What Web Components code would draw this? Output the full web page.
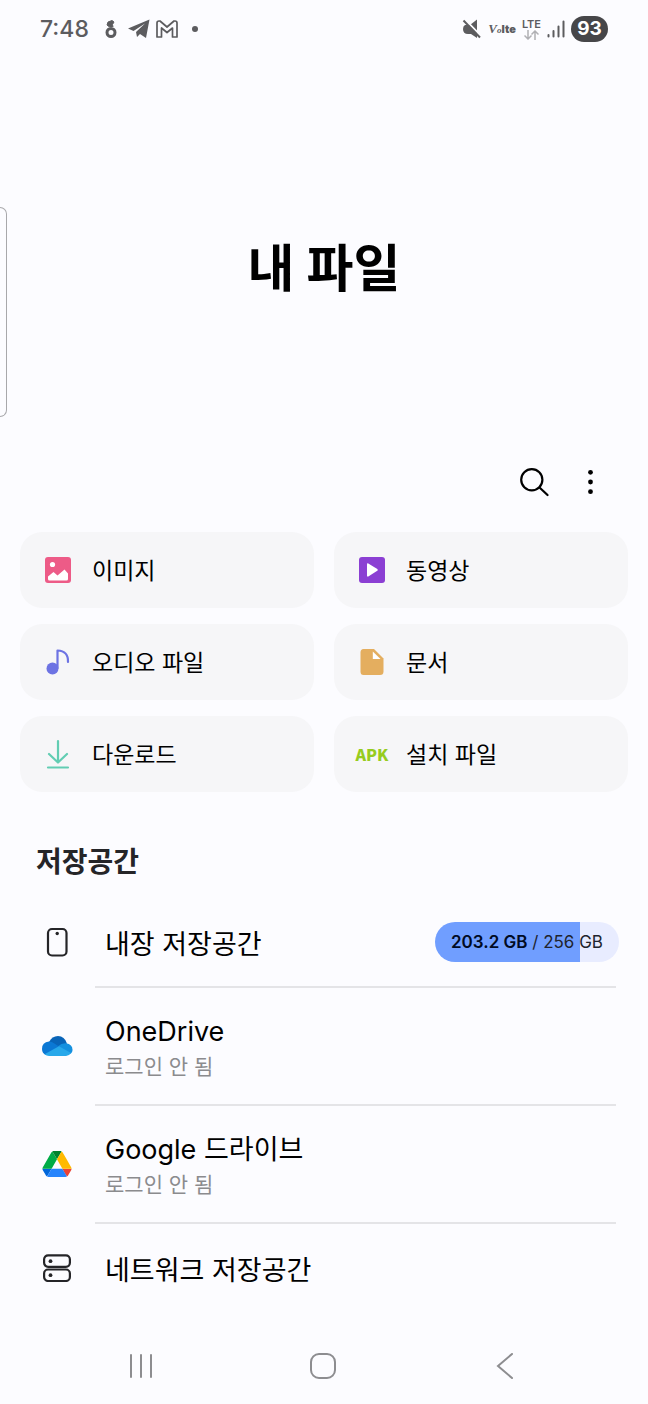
<!DOCTYPE html>
<html lang="ko">
<head>
<meta charset="utf-8">
<meta name="viewport" content="width=device-width, initial-scale=1">
<title>내 파일</title>
<style>
  html { background: #fcfcff; }
  body {
    margin: 0;
    color: #000;
    font-family: Inter, "Noto Sans CJK KR", sans-serif;
  }
</style>
</head>
<body>
<files-app></files-app>

<template id="t-status">
  <style>
    :host { display: flex; align-items: center; justify-content: space-between; height: 58px; padding: 0 40px; color: #5c5c5f; }
    .side { display: flex; align-items: center; }
    .right { gap: 6px; }
    svg { display: block; flex: none; }
    time { font-size: 23px; line-height: 28px; font-weight: 500; margin-right: 8px; }
    .volte { display: flex; align-items: baseline; font: italic 700 13px/20px "Liberation Serif", serif; }
    .volte small { font-size: 9px; }
    .volte b { font: 900 11px/20px Inter, sans-serif; }
    .lte { display: grid; justify-items: center; font-size: 11px; line-height: 11px; font-weight: 600; }
    .battery { background: #464649; color: #fff; border-radius: 13px; width: 37px; height: 26px; font-size: 19px; line-height: 26px; font-weight: 700; text-align: center; }
  </style>
  <div class="side left">
    <time>7:48</time>
    <svg width="28" height="22" viewBox="0 0 14 22" fill="none" stroke="#5c5c5f"><circle cx="7" cy="14.500" r="4" stroke-width="3"/><path d="M5.500 9 3 7 4 4 8 2.500 10 4 8.500 6.500 9 9" fill="#5c5c5f" stroke-width="1"/></svg>
    <svg width="28" height="20" viewBox="0 0 22 20" fill="#5c5c5f"><path d="M0 9.500 21.500.5 18 19l-6-4-3 3-1-5L17 4.500 5.500 12z"/></svg>
    <svg width="28" height="18" viewBox="0 0 22 18" fill="none" stroke="#5c5c5f" stroke-width="1.700" stroke-linejoin="round"><path d="M1 3q0-2 2-2h1l7 6 7-6h1q2 0 2 2v14h-4.500V8L11 12.500 5.500 8v9H1z"/></svg>
    <svg width="28" height="8" viewBox="0 0 8 8"><circle cx="4" cy="4" r="3" fill="#5c5c5f"/></svg>
  </div>
  <div class="side right">
    <svg width="20" height="20" viewBox="0 0 20 20" fill="#5c5c5f"><path d="M3 6h5l7-5.500V19L9 15H6Q1 15 1 10q0-3 2-4z"/><path d="M2.500 0 19.500 17.500" stroke="#fcfcff" stroke-width="2"/><path d="M1.500 1.500 18 18.500" stroke="#5c5c5f" stroke-width="2"/></svg>
    <span class="volte">V<small>o</small><b>lte</b></span>
    <span class="lte">LTE<svg width="15" height="10" viewBox="0 0 15 10" fill="none" stroke="#b0b0b4" stroke-width="1.500"><path d="M4 0v9M.5 5.500 4 9l3.500-3.500M11 10V1M7.500 4.500 11 1l3.500 3.500"/></svg></span>
    <svg width="18" height="18" viewBox="0 0 18 18" stroke="#5c5c5f" stroke-width="2" stroke-linecap="round"><path d="M1.500 15v1.500M6.500 11v5.500"/><path d="M11.500 6.500v10M16.500 1.500v15"/></svg>
    <span class="battery">93</span>
  </div>
</template>

<template id="t-card">
  <style>
    :host { display: block; }
    button { display: flex; align-items: center; gap: 16px; width: 100%; height: 76px; padding: 0 20px; border: 0; border-radius: 22px; background: #f6f6f8; color: inherit; font: inherit; font-size: 23px; line-height: 32px; text-align: left; }
    .icon { display: grid; place-items: center; flex: none; width: 36px; }
    .label { padding-top: 2px; }
  </style>
  <button type="button"><span class="icon"><slot name="icon"></slot></span><span class="label"><slot></slot></span></button>
</template>

<template id="t-row">
  <style>
    :host { display: block; }
    button { display: flex; align-items: center; width: 100%; min-height: 88px; padding: 0 29px 0 36px; border: 0; background: none; color: inherit; font: inherit; text-align: left; }
    :host([double]) button { min-height: 116px; }
    .icon { display: grid; place-items: center; flex: none; width: 42px; margin-right: 27px; }
    .text { display: grid; flex: 1; padding-top: 6px; }
    .name { font-size: 27px; line-height: 36px; }
    ::slotted([slot=detail]) { font-size: 21px; line-height: 34px; color: #8b8b8e; }
    .rule { height: 2px; margin: 0 32px 0 95px; background: #e4e4e7; }
    :host([last]) .rule { display: none; }
  </style>
  <button type="button">
    <span class="icon"><slot name="icon"></slot></span>
    <span class="text"><span class="name"><slot></slot></span><slot name="detail"></slot></span>
    <slot name="end"></slot>
  </button>
  <div class="rule"></div>
</template>

<template id="t-usage">
  <style>
    :host { display: block; padding: 0 16px; border-radius: 20px; font-size: 17px; line-height: 40px; color: #20242e; white-space: nowrap;
      background: linear-gradient(90deg, #709eff 79%, #e8ecff 79%); }
    b { font-weight: 600; color: #000b24; }
  </style>
  <b><slot name="used"></slot></b> / <slot></slot>
</template>

<template id="t-nav">
  <style>
    :host { display: grid; grid-template-columns: repeat(3, 1fr); height: 76px; padding: 0 52px 0 50px; margin-top: auto; }
    button { display: grid; place-items: center; padding: 0; border: 0; background: none; }
    svg { fill: none; stroke: #8d8d90; stroke-width: 2; stroke-linecap: round; }
  </style>
  <button type="button" aria-label="최근 앱"><svg width="26" height="26" viewBox="0 0 26 26"><path d="M3 2v22M13 2v22M23 2v22"/></svg></button>
  <button type="button" aria-label="홈"><svg width="26" height="26" viewBox="0 0 26 26"><rect x="1" y="1" width="24" height="24" rx="8"/></svg></button>
  <button type="button" aria-label="뒤로"><svg width="26" height="26" viewBox="0 0 26 26"><path d="M20 1 6 13l14 12"/></svg></button>
</template>

<template id="t-app">
  <style>
    :host { display: flex; flex-direction: column; min-height: 100vh; position: relative; }
    header { padding: 173px 20px 147px; text-align: center; }
    h1 { margin: 0; font-size: 51px; line-height: 76px; font-weight: 700; }
    .tools { display: flex; justify-content: flex-end; height: 56px; margin: 0 30px 22px; }
    .tools button { display: grid; place-items: center; width: 56px; padding: 0; border: 0; background: none; }
    .cards { display: grid; grid-template-columns: 1fr 1fr; gap: 16px 20px; padding: 0 20px; }
    h2 { margin: 50px 36px 16px; font-size: 28px; line-height: 40px; font-weight: 700; color: #252528; }
    .edge { position: absolute; left: 0; top: 207px; width: 6px; height: 208px; border: 1px solid #a8a8ab; border-left: 0; border-radius: 0 8px 8px 0; }
    .apk { font: 900 16px/24px "Noto Sans CJK KR", sans-serif; color: #96cc1f; }
    svg { display: block; }
  </style>
  <status-bar></status-bar>
  <div class="edge"></div>
  <header><h1>내 파일</h1></header>
  <div class="tools">
    <button type="button" aria-label="검색"><svg width="30" height="30" viewBox="0 0 30 30" fill="none" stroke="#000" stroke-width="2.200" stroke-linecap="round"><circle cx="12.800" cy="12.800" r="10.600"/><path d="m20.500 20.500 8 7.500"/></svg></button>
    <button type="button" aria-label="옵션 더보기"><svg width="8" height="26" viewBox="0 0 8 26"><circle cx="4.500" cy="3.300" r="2.400"/><circle cx="4.500" cy="13" r="2.400"/><circle cx="4.500" cy="22.700" r="2.400"/></svg></button>
  </div>
  <div class="cards">
    <category-card><svg slot="icon" width="26" height="26" viewBox="0 0 26 26"><rect width="26" height="26" rx="3" fill="#ed5b87"/><circle cx="7.500" cy="7.500" r="2.600" fill="#fff"/><path d="M3 19.500 8.500 15l4 3.500 7-6 3.500 4V22q0 1.500-1.500 1.500h-17Q3 23.500 3 22z" fill="#fff"/></svg>이미지</category-card>
    <category-card><svg slot="icon" width="26" height="26" viewBox="0 0 26 26"><rect width="26" height="26" rx="3" fill="#8b3fd3"/><path d="M8 7.300q0-1.500 1.300-.8l9 5.600q1 .9 0 1.700l-9 5.600Q8 20 8 18.700z" fill="#fff"/></svg>동영상</category-card>
    <category-card><svg slot="icon" width="24" height="26" viewBox="0 0 24 26"><circle cx="6.500" cy="19.500" r="6" fill="#6d73e3"/><path d="M11.500 19V1.500Q22.500 2 22 13" fill="none" stroke="#6d73e3" stroke-width="2.200" stroke-linecap="round" stroke-linejoin="round"/></svg>오디오 파일</category-card>
    <category-card><svg slot="icon" width="24" height="26" viewBox="0 0 24 26"><path d="M3.500 0H14l9.500 9.500v13q0 3.500-3.500 3.500H3.500Q.5 26 .5 22.500v-19Q.5 0 3.500 0z" fill="#e4ae5f"/><path d="M12.800 2.500V10h7.700z" fill="#fff"/></svg>문서</category-card>
    <category-card><svg slot="icon" width="24" height="30" viewBox="0 0 24 30" fill="none" stroke="#62cdb3" stroke-width="2.200" stroke-linecap="round" stroke-linejoin="round"><path d="M12 2v21M3 15l9 8.500 9-8.500M2 28.500h20"/></svg>다운로드</category-card>
    <category-card><span slot="icon" class="apk">APK</span>설치 파일</category-card>
  </div>
  <h2>저장공간</h2>
  <storage-row><svg slot="icon" width="22" height="30" viewBox="0 0 22 30"><rect x="2" y="2" width="18.500" height="26.500" rx="4" fill="none" stroke="#252528" stroke-width="2.200"/><circle cx="11.200" cy="6.500" r="1.700" fill="#252528"/></svg>내장 저장공간<storage-usage slot="end"><span slot="used">203.2 GB</span>256 GB</storage-usage></storage-row>
  <storage-row double><svg slot="icon" width="32" height="20" viewBox="0 0 32 20"><path d="M8 6Q11 0 17 0q6.500 0 9 7.500L16 14z" fill="#0864b8"/><path d="M8 5.500q3 0 5 1.700L22 13 5 19Q1 17.500 1 13 1 6 8 5.500z" fill="#0b78d4"/><path d="M17 10.200q4-3.500 8-3 6.500 1 6.500 6.500 0 3-3 4.500z" fill="#1490df"/><path d="M3.500 18.200 18 10.300 30 17q-2 3-5 3H8q-2.500 0-4.500-1.800z" fill="#28a8ea"/></svg>OneDrive<span slot="detail">로그인 안 됨</span></storage-row>
  <storage-row double><svg slot="icon" width="30" height="26" viewBox="0 0 87.300 78"><path d="m6.600 66.850 3.850 6.650c.8 1.400 1.950 2.500 3.300 3.300l13.750-23.800h-27.500c0 1.550.4 3.100 1.200 4.500z" fill="#0066da"/><path d="m43.650 25-13.750-23.800c-1.350.8-2.500 1.900-3.300 3.300l-25.400 44a9.060 9.060 0 0 0 -1.200 4.500h27.500z" fill="#00ac47"/><path d="m73.550 76.800c1.350-.8 2.500-1.900 3.300-3.300l1.600-2.750 7.650-13.250c.8-1.400 1.200-2.950 1.200-4.500h-27.500l5.850 11.500z" fill="#ea4335"/><path d="m43.650 25 13.750-23.800c-1.350-.8-2.900-1.200-4.500-1.200h-18.500c-1.600 0-3.150.45-4.500 1.200z" fill="#00832d"/><path d="m59.800 53h-32.300l-13.750 23.800c1.350.8 2.900 1.200 4.500 1.200h50.800c1.600 0 3.150-.45 4.500-1.200z" fill="#2684fc"/><path d="m73.400 26.500-12.700-22c-.8-1.400-1.950-2.500-3.300-3.300l-13.750 23.800 16.150 28h27.450c0-1.550-.4-3.100-1.200-4.500z" fill="#ffba00"/></svg>Google 드라이브<span slot="detail">로그인 안 됨</span></storage-row>
  <storage-row last><svg slot="icon" width="28" height="28" viewBox="0 0 28 28"><g fill="none" stroke="#252528" stroke-width="2.200"><rect x="1.100" y="1.300" width="25.800" height="11.500" rx="4"/><rect x="1.100" y="15.500" width="25.800" height="11.500" rx="4"/></g><circle cx="7.500" cy="7.200" r="1.900" fill="#252528"/><circle cx="7.500" cy="21.200" r="1.900" fill="#252528"/></svg>네트워크 저장공간</storage-row>
  <system-nav></system-nav>
</template>

<script>
  const define = (name, templateId) => customElements.define(name, class extends HTMLElement {
    constructor() {
      super();
      this.attachShadow({ mode: 'open' })
        .append(document.getElementById(templateId).content.cloneNode(true));
    }
  });
  define('status-bar', 't-status');
  define('category-card', 't-card');
  define('storage-usage', 't-usage');
  define('storage-row', 't-row');
  define('system-nav', 't-nav');
  define('files-app', 't-app');
</script>
</body>
</html>
